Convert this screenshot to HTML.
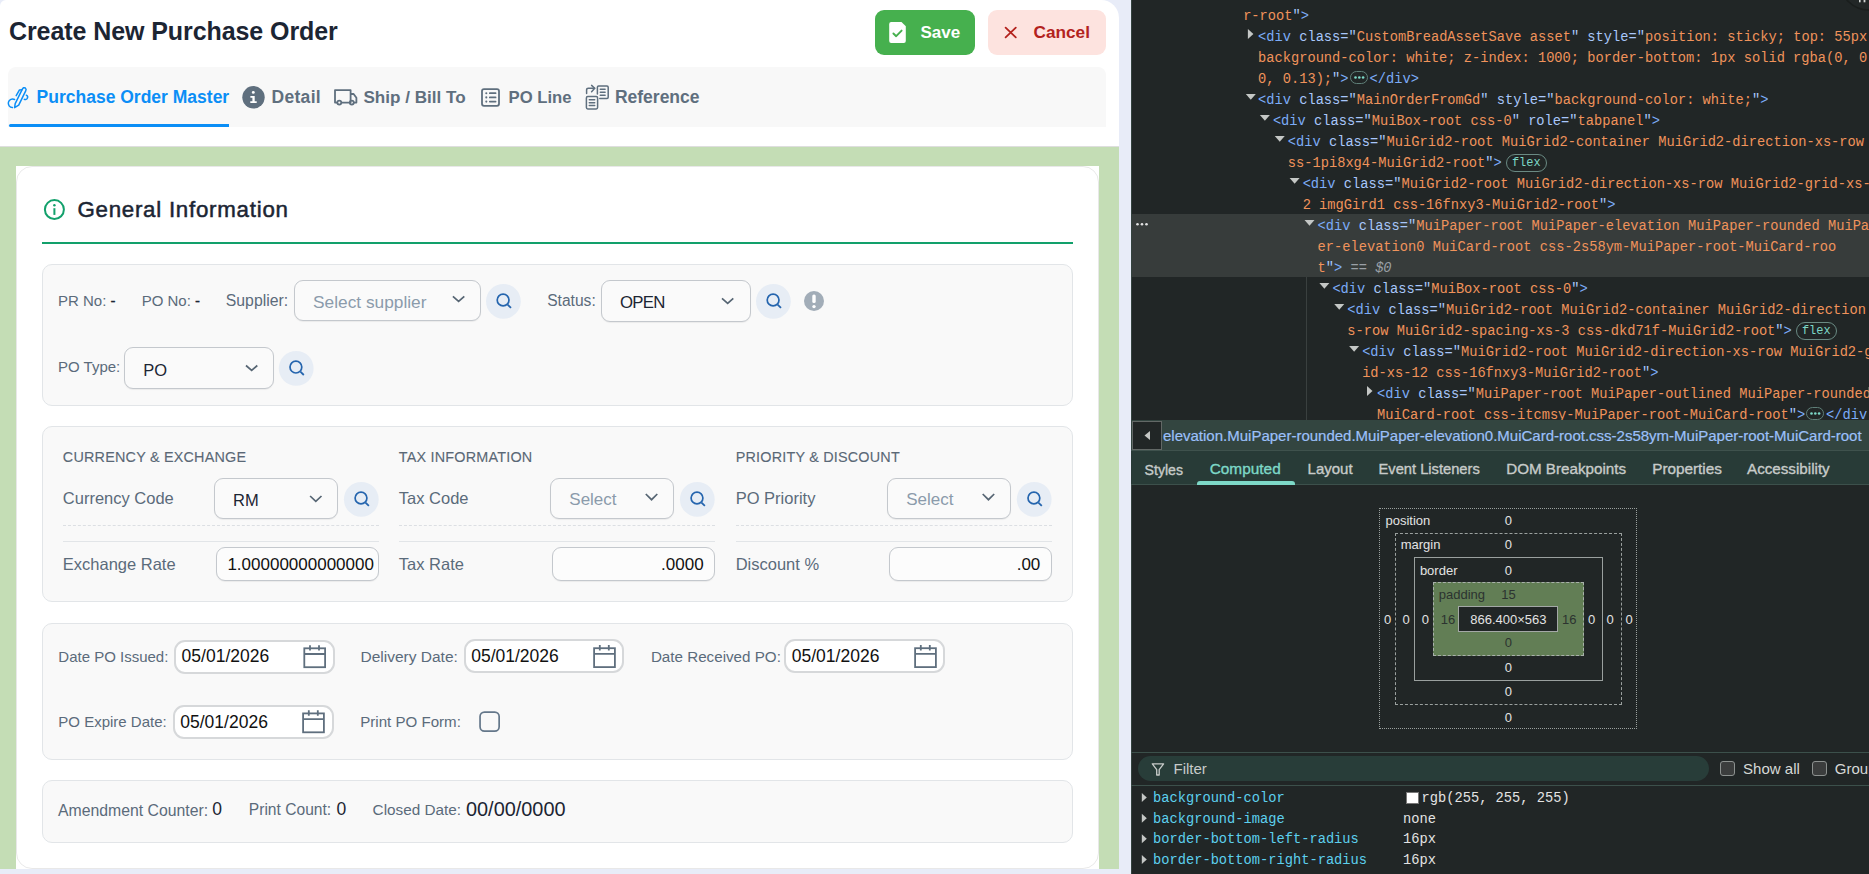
<!DOCTYPE html><html><head><meta charset="utf-8"><title>Create New Purchase Order</title><style>html,body{margin:0;padding:0;}body{width:1869px;height:874px;overflow:hidden;position:relative;background:#e8ecf8;font-family:"Liberation Sans",sans-serif;}</style></head><body>
<div style="position:absolute;left:0px;top:0px;width:1119px;height:869px;background:#fff;border-radius:6px 18px 0 0;"></div>
<div style="position:absolute;left:0px;top:146px;width:1119px;height:1px;background:rgba(0,0,0,0.13);"></div>
<div style="position:absolute;left:0px;top:147px;width:1119px;height:722px;background:#c4ddb5;"></div>
<div style="position:absolute;left:16px;top:166px;width:1083px;height:703px;background:#fff;"></div>
<div style="position:absolute;left:16px;top:166px;width:1083px;height:703px;border:1px solid rgba(0,0,0,0.09);border-radius:16px;box-sizing:border-box;"></div>
<div style="position:absolute;left:9.00px;top:15.33px;line-height:32px;font-size:25px;font-family:'Liberation Sans', sans-serif;font-weight:700;color:#1c2533;white-space:pre;letter-spacing:-0.08px;">Create New Purchase Order</div>
<div style="position:absolute;left:875px;top:10px;width:100px;height:45px;background:#46b04e;border-radius:9px;"></div>
<div style="position:absolute;left:920.50px;top:21.61px;line-height:22px;font-size:17px;font-family:'Liberation Sans', sans-serif;font-weight:700;color:#ffffff;white-space:pre;">Save</div>
<div style="position:absolute;left:988px;top:10px;width:118px;height:45px;background:#fde3df;border-radius:9px;"></div>
<div style="position:absolute;left:1033.60px;top:20.84px;line-height:22px;font-size:17.2px;font-family:'Liberation Sans', sans-serif;font-weight:700;color:#b3221d;white-space:pre;">Cancel</div>
<div style="position:absolute;left:8px;top:67px;width:1098px;height:60px;background:#f8f8f8;border-radius:8px 8px 0 0;"></div>
<div style="position:absolute;left:9px;top:124px;width:220px;height:3px;background:#0b8ef6;border-radius:2px 0 0 2px;"></div>
<div style="position:absolute;left:36.60px;top:86.43px;line-height:23px;font-size:17.5px;font-family:'Liberation Sans', sans-serif;font-weight:700;color:#0b8ef6;white-space:pre;">Purchase Order Master</div>
<div style="position:absolute;left:271.50px;top:86.43px;line-height:23px;font-size:17.5px;font-family:'Liberation Sans', sans-serif;font-weight:700;color:#5f6f7e;white-space:pre;letter-spacing:0.3px;">Detail</div>
<div style="position:absolute;left:363.40px;top:87.07px;line-height:22px;font-size:17.1px;font-family:'Liberation Sans', sans-serif;font-weight:700;color:#5f6f7e;white-space:pre;">Ship / Bill To</div>
<div style="position:absolute;left:508.50px;top:87.21px;line-height:22px;font-size:16.7px;font-family:'Liberation Sans', sans-serif;font-weight:700;color:#5f6f7e;white-space:pre;">PO Line</div>
<div style="position:absolute;left:614.90px;top:86.43px;line-height:23px;font-size:17.5px;font-family:'Liberation Sans', sans-serif;font-weight:700;color:#5f6f7e;white-space:pre;">Reference</div>
<div style="position:absolute;left:77.40px;top:194.77px;line-height:29px;font-size:22.3px;font-family:'Liberation Sans', sans-serif;font-weight:400;color:#1c2533;white-space:pre;letter-spacing:0.75px;-webkit-text-stroke:0.5px #1c2533;">General Information</div>
<div style="position:absolute;left:42px;top:242px;width:1031px;height:2px;background:#12a06b;"></div>
<div style="position:absolute;left:42px;top:264px;width:1031px;height:142px;background:#f9f9f9;border:1px solid #e2e5e8;border-radius:10px;box-sizing:border-box;"></div>
<div style="position:absolute;left:58.00px;top:290.80px;line-height:20px;font-size:15px;font-family:'Liberation Sans', sans-serif;font-weight:400;color:#5b6b7b;white-space:pre;">PR No: <span style="color:#1c2533;-webkit-text-stroke:0.3px #1c2533">-</span></div>
<div style="position:absolute;left:141.70px;top:290.80px;line-height:20px;font-size:15px;font-family:'Liberation Sans', sans-serif;font-weight:400;color:#5b6b7b;white-space:pre;">PO No: <span style="color:#1c2533;-webkit-text-stroke:0.3px #1c2533">-</span></div>
<div style="position:absolute;left:225.80px;top:290.02px;line-height:21px;font-size:15.8px;font-family:'Liberation Sans', sans-serif;font-weight:400;color:#5b6b7b;white-space:pre;">Supplier:</div>
<div style="position:absolute;left:294px;top:280px;width:187px;height:41px;background:#fafafa;border:1px solid #c4c8cd;border-radius:9px;box-sizing:border-box;box-shadow:0 1px 1px rgba(0,0,0,0.06);"></div>
<div style="position:absolute;left:313.10px;top:291.30px;line-height:22px;font-size:17.3px;font-family:'Liberation Sans', sans-serif;font-weight:400;color:#8b9bab;white-space:pre;">Select supplier</div>
<div style="position:absolute;left:547.20px;top:290.59px;line-height:20px;font-size:15.6px;font-family:'Liberation Sans', sans-serif;font-weight:400;color:#5b6b7b;white-space:pre;">Status:</div>
<div style="position:absolute;left:601px;top:280px;width:150px;height:42px;background:#fafafa;border:1px solid #c4c8cd;border-radius:9px;box-sizing:border-box;box-shadow:0 1px 1px rgba(0,0,0,0.06);"></div>
<div style="position:absolute;left:620.00px;top:292.38px;line-height:22px;font-size:16.8px;font-family:'Liberation Sans', sans-serif;font-weight:400;color:#1c2533;white-space:pre;letter-spacing:-0.7px;">OPEN</div>
<div style="position:absolute;left:58.00px;top:357.30px;line-height:20px;font-size:15px;font-family:'Liberation Sans', sans-serif;font-weight:400;color:#5b6b7b;white-space:pre;">PO Type:</div>
<div style="position:absolute;left:124px;top:347px;width:150px;height:42px;background:#fafafa;border:1px solid #c4c8cd;border-radius:9px;box-sizing:border-box;box-shadow:0 1px 1px rgba(0,0,0,0.06);"></div>
<div style="position:absolute;left:143.30px;top:360.28px;line-height:21px;font-size:16.5px;font-family:'Liberation Sans', sans-serif;font-weight:400;color:#1c2533;white-space:pre;">PO</div>
<div style="position:absolute;left:42px;top:426px;width:1031px;height:176px;background:#f9f9f9;border:1px solid #e2e5e8;border-radius:10px;box-sizing:border-box;"></div>
<div style="position:absolute;left:62.80px;top:448.11px;line-height:19px;font-size:14.4px;font-family:'Liberation Sans', sans-serif;font-weight:400;color:#5a6876;white-space:pre;letter-spacing:0.2px;-webkit-text-stroke:0.12px #5a6876;">CURRENCY &amp; EXCHANGE</div>
<div style="position:absolute;left:62.80px;top:487.78px;line-height:21px;font-size:16.5px;font-family:'Liberation Sans', sans-serif;font-weight:400;color:#5b6b7b;white-space:pre;">Currency Code</div>
<div style="position:absolute;left:214.3px;top:478px;width:124.0px;height:41px;background:#fafafa;border:1px solid #c4c8cd;border-radius:9px;box-sizing:border-box;box-shadow:0 1px 1px rgba(0,0,0,0.06);"></div>
<div style="position:absolute;left:233.00px;top:489.68px;line-height:21px;font-size:16.5px;font-family:'Liberation Sans', sans-serif;font-weight:400;color:#1c2533;white-space:pre;">RM</div>
<div style="position:absolute;left:62.8px;top:525px;width:316px;height:1px;border-top:1px dashed #dcdfe3;"></div>
<div style="position:absolute;left:62.8px;top:541px;width:316px;height:1px;background:#e2e5e8;"></div>
<div style="position:absolute;left:62.80px;top:553.78px;line-height:21px;font-size:16.5px;font-family:'Liberation Sans', sans-serif;font-weight:400;color:#5b6b7b;white-space:pre;">Exchange Rate</div>
<div style="position:absolute;left:215.8px;top:547px;width:163px;height:34px;background:#fcfcfc;border:1px solid #c4c8cd;border-radius:9px;box-sizing:border-box;box-shadow:0 1px 1px rgba(0,0,0,0.06);"></div>
<div style="position:absolute;left:398.80px;top:448.11px;line-height:19px;font-size:14.4px;font-family:'Liberation Sans', sans-serif;font-weight:400;color:#5a6876;white-space:pre;letter-spacing:0.2px;-webkit-text-stroke:0.12px #5a6876;">TAX INFORMATION</div>
<div style="position:absolute;left:398.80px;top:487.78px;line-height:21px;font-size:16.5px;font-family:'Liberation Sans', sans-serif;font-weight:400;color:#5b6b7b;white-space:pre;">Tax Code</div>
<div style="position:absolute;left:550.3px;top:478px;width:124.0px;height:41px;background:#fafafa;border:1px solid #c4c8cd;border-radius:9px;box-sizing:border-box;box-shadow:0 1px 1px rgba(0,0,0,0.06);"></div>
<div style="position:absolute;left:569.30px;top:489.01px;line-height:22px;font-size:17px;font-family:'Liberation Sans', sans-serif;font-weight:400;color:#8b9bab;white-space:pre;">Select</div>
<div style="position:absolute;left:398.8px;top:525px;width:316px;height:1px;border-top:1px dashed #dcdfe3;"></div>
<div style="position:absolute;left:398.8px;top:541px;width:316px;height:1px;background:#e2e5e8;"></div>
<div style="position:absolute;left:398.80px;top:553.78px;line-height:21px;font-size:16.5px;font-family:'Liberation Sans', sans-serif;font-weight:400;color:#5b6b7b;white-space:pre;">Tax Rate</div>
<div style="position:absolute;left:551.8px;top:547px;width:163px;height:34px;background:#fcfcfc;border:1px solid #c4c8cd;border-radius:9px;box-sizing:border-box;box-shadow:0 1px 1px rgba(0,0,0,0.06);"></div>
<div style="position:absolute;left:735.70px;top:448.11px;line-height:19px;font-size:14.4px;font-family:'Liberation Sans', sans-serif;font-weight:400;color:#5a6876;white-space:pre;letter-spacing:0.2px;-webkit-text-stroke:0.12px #5a6876;">PRIORITY &amp; DISCOUNT</div>
<div style="position:absolute;left:735.70px;top:487.78px;line-height:21px;font-size:16.5px;font-family:'Liberation Sans', sans-serif;font-weight:400;color:#5b6b7b;white-space:pre;">PO Priority</div>
<div style="position:absolute;left:887.2px;top:478px;width:124.0px;height:41px;background:#fafafa;border:1px solid #c4c8cd;border-radius:9px;box-sizing:border-box;box-shadow:0 1px 1px rgba(0,0,0,0.06);"></div>
<div style="position:absolute;left:906.20px;top:489.01px;line-height:22px;font-size:17px;font-family:'Liberation Sans', sans-serif;font-weight:400;color:#8b9bab;white-space:pre;">Select</div>
<div style="position:absolute;left:735.7px;top:525px;width:316px;height:1px;border-top:1px dashed #dcdfe3;"></div>
<div style="position:absolute;left:735.7px;top:541px;width:316px;height:1px;background:#e2e5e8;"></div>
<div style="position:absolute;left:735.70px;top:553.78px;line-height:21px;font-size:16.5px;font-family:'Liberation Sans', sans-serif;font-weight:400;color:#5b6b7b;white-space:pre;">Discount %</div>
<div style="position:absolute;left:888.7px;top:547px;width:163px;height:34px;background:#fcfcfc;border:1px solid #c4c8cd;border-radius:9px;box-sizing:border-box;box-shadow:0 1px 1px rgba(0,0,0,0.06);"></div>
<div style="position:absolute;left:217px;top:548px;width:158px;height:32px;overflow:hidden;"><div style="position:absolute;left:10.400000000000006px;top:0.71px;line-height:32px;font-size:17px;font-family:'Liberation Sans', sans-serif;color:#111;white-space:pre;">1.00000000000000</div></div>
<div style="position:absolute;left:0.00px;top:553.71px;line-height:22px;font-size:17px;font-family:'Liberation Sans', sans-serif;font-weight:400;color:#111;white-space:pre;width:703.6px;text-align:right;">.0000</div>
<div style="position:absolute;left:0.00px;top:553.71px;line-height:22px;font-size:17px;font-family:'Liberation Sans', sans-serif;font-weight:400;color:#111;white-space:pre;width:1040.3px;text-align:right;">.00</div>
<div style="position:absolute;left:42px;top:623px;width:1031px;height:137px;background:#f9f9f9;border:1px solid #e2e5e8;border-radius:10px;box-sizing:border-box;"></div>
<div style="position:absolute;left:58.30px;top:646.80px;line-height:20px;font-size:15px;font-family:'Liberation Sans', sans-serif;font-weight:400;color:#5b6b7b;white-space:pre;">Date PO Issued:</div>
<div style="position:absolute;left:174px;top:639.5px;width:160.5px;height:34.0px;background:#fff;border:2px solid #d6d8da;border-radius:11px;box-sizing:border-box;"></div>
<div style="position:absolute;left:181.60px;top:645.43px;line-height:23px;font-size:17.5px;font-family:'Liberation Sans', sans-serif;font-weight:400;color:#111;white-space:pre;">05/01/2026</div>
<div style="position:absolute;left:360.50px;top:646.63px;line-height:20px;font-size:15.5px;font-family:'Liberation Sans', sans-serif;font-weight:400;color:#5b6b7b;white-space:pre;">Delivery Date:</div>
<div style="position:absolute;left:463.6px;top:639.4px;width:160.60000000000002px;height:34.0px;background:#fff;border:2px solid #d6d8da;border-radius:11px;box-sizing:border-box;"></div>
<div style="position:absolute;left:471.20px;top:645.33px;line-height:23px;font-size:17.5px;font-family:'Liberation Sans', sans-serif;font-weight:400;color:#111;white-space:pre;">05/01/2026</div>
<div style="position:absolute;left:650.90px;top:646.73px;line-height:20px;font-size:15.2px;font-family:'Liberation Sans', sans-serif;font-weight:400;color:#5b6b7b;white-space:pre;">Date Received PO:</div>
<div style="position:absolute;left:783.5px;top:639.4px;width:161.70000000000005px;height:34.0px;background:#fff;border:2px solid #d6d8da;border-radius:11px;box-sizing:border-box;"></div>
<div style="position:absolute;left:791.80px;top:645.33px;line-height:23px;font-size:17.5px;font-family:'Liberation Sans', sans-serif;font-weight:400;color:#111;white-space:pre;">05/01/2026</div>
<div style="position:absolute;left:58.30px;top:711.60px;line-height:20px;font-size:15px;font-family:'Liberation Sans', sans-serif;font-weight:400;color:#5b6b7b;white-space:pre;">PO Expire Date:</div>
<div style="position:absolute;left:172.7px;top:704.6px;width:160.90000000000003px;height:34.0px;background:#fff;border:2px solid #d6d8da;border-radius:11px;box-sizing:border-box;"></div>
<div style="position:absolute;left:180.30px;top:710.53px;line-height:23px;font-size:17.5px;font-family:'Liberation Sans', sans-serif;font-weight:400;color:#111;white-space:pre;">05/01/2026</div>
<div style="position:absolute;left:360.20px;top:711.56px;line-height:20px;font-size:15.1px;font-family:'Liberation Sans', sans-serif;font-weight:400;color:#5b6b7b;white-space:pre;">Print PO Form:</div>
<div style="position:absolute;left:42px;top:780px;width:1031px;height:63px;background:#f9f9f9;border:1px solid #e2e5e8;border-radius:10px;box-sizing:border-box;"></div>
<div style="position:absolute;left:58.00px;top:799.52px;line-height:21px;font-size:15.8px;font-family:'Liberation Sans', sans-serif;font-weight:400;color:#5b6b7b;white-space:pre;">Amendment Counter:</div>
<div style="position:absolute;left:212.30px;top:797.93px;line-height:23px;font-size:17.5px;font-family:'Liberation Sans', sans-serif;font-weight:400;color:#1c2533;white-space:pre;">0</div>
<div style="position:absolute;left:248.80px;top:800.09px;line-height:20px;font-size:15.6px;font-family:'Liberation Sans', sans-serif;font-weight:400;color:#5b6b7b;white-space:pre;">Print Count:</div>
<div style="position:absolute;left:336.60px;top:797.93px;line-height:23px;font-size:17.5px;font-family:'Liberation Sans', sans-serif;font-weight:400;color:#1c2533;white-space:pre;">0</div>
<div style="position:absolute;left:372.60px;top:800.20px;line-height:20px;font-size:15.3px;font-family:'Liberation Sans', sans-serif;font-weight:400;color:#5b6b7b;white-space:pre;">Closed Date:</div>
<div style="position:absolute;left:466.00px;top:795.60px;line-height:26px;font-size:19.9px;font-family:'Liberation Sans', sans-serif;font-weight:400;color:#1c2533;white-space:pre;">00/00/0000</div>
<div style="position:absolute;left:1131px;top:0px;width:738px;height:874px;background:#212626;"></div>
<div style="position:absolute;left:1131px;top:0px;width:1px;height:874px;background:#34433f;"></div>
<div style="position:absolute;left:1132px;top:214px;width:737px;height:63px;background:#373c3b;"></div>
<div style="position:absolute;left:1306px;top:277px;width:1px;height:143px;background:#3a403f;"></div>
<div style="position:absolute;left:1243.125px;top:5.5px;height:21px;line-height:21px;font-size:13.72px;font-family:'Liberation Mono', monospace;white-space:pre;"><span style="color:#f0935b">r-root</span><span style="color:#a8c7fa">&quot;</span><span style="color:#7cacf8">&gt;</span></div>
<div style="position:absolute;left:1258.0px;top:26.5px;height:21px;line-height:21px;font-size:13.72px;font-family:'Liberation Mono', monospace;white-space:pre;"><span style="color:#7cacf8">&lt;div</span> <span style="color:#a8c7fa">class</span><span style="color:#a8c7fa">=&quot;</span><span style="color:#f0935b">CustomBreadAssetSave asset</span><span style="color:#a8c7fa">&quot;</span> <span style="color:#a8c7fa">style</span><span style="color:#a8c7fa">=&quot;</span><span style="color:#f0935b">position: sticky; top: 55px</span></div>
<div style="position:absolute;left:1258.0px;top:47.5px;height:21px;line-height:21px;font-size:13.72px;font-family:'Liberation Mono', monospace;white-space:pre;"><span style="color:#f0935b">background-color: white; z-index: 1000; border-bottom: 1px solid rgba(0, 0</span></div>
<div style="position:absolute;left:1258.0px;top:68.5px;height:21px;line-height:21px;font-size:13.72px;font-family:'Liberation Mono', monospace;white-space:pre;"><span style="color:#f0935b">0, 0.13);</span><span style="color:#a8c7fa">&quot;</span><span style="color:#7cacf8">&gt;</span><span style="display:inline-block;width:18px;height:13px;border:1px solid #5f7f78;border-radius:7px;box-sizing:border-box;vertical-align:top;margin:2.1px 2px 0 1px;position:relative;"><svg width="16" height="11" style="position:absolute;left:0;top:0"><circle cx="4.5" cy="5.5" r="1.3" fill="#7dd8c7"/><circle cx="8.3" cy="5.5" r="1.3" fill="#7dd8c7"/><circle cx="12.1" cy="5.5" r="1.3" fill="#7dd8c7"/></svg></span><span style="color:#7cacf8">&lt;/div&gt;</span></div>
<div style="position:absolute;left:1258.0px;top:89.5px;height:21px;line-height:21px;font-size:13.72px;font-family:'Liberation Mono', monospace;white-space:pre;"><span style="color:#7cacf8">&lt;div</span> <span style="color:#a8c7fa">class</span><span style="color:#a8c7fa">=&quot;</span><span style="color:#f0935b">MainOrderFromGd</span><span style="color:#a8c7fa">&quot;</span> <span style="color:#a8c7fa">style</span><span style="color:#a8c7fa">=&quot;</span><span style="color:#f0935b">background-color: white;</span><span style="color:#a8c7fa">&quot;</span><span style="color:#7cacf8">&gt;</span></div>
<div style="position:absolute;left:1272.875px;top:110.5px;height:21px;line-height:21px;font-size:13.72px;font-family:'Liberation Mono', monospace;white-space:pre;"><span style="color:#7cacf8">&lt;div</span> <span style="color:#a8c7fa">class</span><span style="color:#a8c7fa">=&quot;</span><span style="color:#f0935b">MuiBox-root css-0</span><span style="color:#a8c7fa">&quot;</span> <span style="color:#a8c7fa">role</span><span style="color:#a8c7fa">=&quot;</span><span style="color:#f0935b">tabpanel</span><span style="color:#a8c7fa">&quot;</span><span style="color:#7cacf8">&gt;</span></div>
<div style="position:absolute;left:1287.75px;top:131.5px;height:21px;line-height:21px;font-size:13.72px;font-family:'Liberation Mono', monospace;white-space:pre;"><span style="color:#7cacf8">&lt;div</span> <span style="color:#a8c7fa">class</span><span style="color:#a8c7fa">=&quot;</span><span style="color:#f0935b">MuiGrid2-root MuiGrid2-container MuiGrid2-direction-xs-row</span></div>
<div style="position:absolute;left:1287.75px;top:152.5px;height:21px;line-height:21px;font-size:13.72px;font-family:'Liberation Mono', monospace;white-space:pre;"><span style="color:#f0935b">ss-1pi8xg4-MuiGrid2-root</span><span style="color:#a8c7fa">&quot;</span><span style="color:#7cacf8">&gt;</span><span style="display:inline-block;width:41px;height:18px;border:1px solid #6a8a83;border-radius:9px;box-sizing:border-box;vertical-align:top;margin:1.6px 0 0 4px;text-align:center;line-height:16px;font-size:12px;color:#7dd8c7;">flex</span></div>
<div style="position:absolute;left:1302.625px;top:173.5px;height:21px;line-height:21px;font-size:13.72px;font-family:'Liberation Mono', monospace;white-space:pre;"><span style="color:#7cacf8">&lt;div</span> <span style="color:#a8c7fa">class</span><span style="color:#a8c7fa">=&quot;</span><span style="color:#f0935b">MuiGrid2-root MuiGrid2-direction-xs-row MuiGrid2-grid-xs-</span></div>
<div style="position:absolute;left:1302.625px;top:194.5px;height:21px;line-height:21px;font-size:13.72px;font-family:'Liberation Mono', monospace;white-space:pre;"><span style="color:#f0935b">2 imgGird1 css-16fnxy3-MuiGrid2-root</span><span style="color:#a8c7fa">&quot;</span><span style="color:#7cacf8">&gt;</span></div>
<div style="position:absolute;left:1317.5px;top:215.5px;height:21px;line-height:21px;font-size:13.72px;font-family:'Liberation Mono', monospace;white-space:pre;"><span style="color:#7cacf8">&lt;div</span> <span style="color:#a8c7fa">class</span><span style="color:#a8c7fa">=&quot;</span><span style="color:#f0935b">MuiPaper-root MuiPaper-elevation MuiPaper-rounded MuiPa</span></div>
<div style="position:absolute;left:1317.5px;top:236.5px;height:21px;line-height:21px;font-size:13.72px;font-family:'Liberation Mono', monospace;white-space:pre;"><span style="color:#f0935b">er-elevation0 MuiCard-root css-2s58ym-MuiPaper-root-MuiCard-roo</span></div>
<div style="position:absolute;left:1317.5px;top:257.5px;height:21px;line-height:21px;font-size:13.72px;font-family:'Liberation Mono', monospace;white-space:pre;"><span style="color:#f0935b">t</span><span style="color:#a8c7fa">&quot;</span><span style="color:#7cacf8">&gt;</span><span style="color:#9aa0a6"> == </span><i style="color:#9aa0a6">$0</i></div>
<div style="position:absolute;left:1332.375px;top:278.5px;height:21px;line-height:21px;font-size:13.72px;font-family:'Liberation Mono', monospace;white-space:pre;"><span style="color:#7cacf8">&lt;div</span> <span style="color:#a8c7fa">class</span><span style="color:#a8c7fa">=&quot;</span><span style="color:#f0935b">MuiBox-root css-0</span><span style="color:#a8c7fa">&quot;</span><span style="color:#7cacf8">&gt;</span></div>
<div style="position:absolute;left:1347.25px;top:299.5px;height:21px;line-height:21px;font-size:13.72px;font-family:'Liberation Mono', monospace;white-space:pre;"><span style="color:#7cacf8">&lt;div</span> <span style="color:#a8c7fa">class</span><span style="color:#a8c7fa">=&quot;</span><span style="color:#f0935b">MuiGrid2-root MuiGrid2-container MuiGrid2-direction</span></div>
<div style="position:absolute;left:1347.25px;top:320.5px;height:21px;line-height:21px;font-size:13.72px;font-family:'Liberation Mono', monospace;white-space:pre;"><span style="color:#f0935b">s-row MuiGrid2-spacing-xs-3 css-dkd71f-MuiGrid2-root</span><span style="color:#a8c7fa">&quot;</span><span style="color:#7cacf8">&gt;</span><span style="display:inline-block;width:41px;height:18px;border:1px solid #6a8a83;border-radius:9px;box-sizing:border-box;vertical-align:top;margin:1.6px 0 0 4px;text-align:center;line-height:16px;font-size:12px;color:#7dd8c7;">flex</span></div>
<div style="position:absolute;left:1362.125px;top:341.5px;height:21px;line-height:21px;font-size:13.72px;font-family:'Liberation Mono', monospace;white-space:pre;"><span style="color:#7cacf8">&lt;div</span> <span style="color:#a8c7fa">class</span><span style="color:#a8c7fa">=&quot;</span><span style="color:#f0935b">MuiGrid2-root MuiGrid2-direction-xs-row MuiGrid2-g</span></div>
<div style="position:absolute;left:1362.125px;top:362.5px;height:21px;line-height:21px;font-size:13.72px;font-family:'Liberation Mono', monospace;white-space:pre;"><span style="color:#f0935b">id-xs-12 css-16fnxy3-MuiGrid2-root</span><span style="color:#a8c7fa">&quot;</span><span style="color:#7cacf8">&gt;</span></div>
<div style="position:absolute;left:1377.0px;top:383.5px;height:21px;line-height:21px;font-size:13.72px;font-family:'Liberation Mono', monospace;white-space:pre;"><span style="color:#7cacf8">&lt;div</span> <span style="color:#a8c7fa">class</span><span style="color:#a8c7fa">=&quot;</span><span style="color:#f0935b">MuiPaper-root MuiPaper-outlined MuiPaper-rounded</span></div>
<div style="position:absolute;left:1377.0px;top:404.5px;height:21px;line-height:21px;font-size:13.72px;font-family:'Liberation Mono', monospace;white-space:pre;"><span style="color:#f0935b">MuiCard-root css-itcmsy-MuiPaper-root-MuiCard-root</span><span style="color:#a8c7fa">&quot;</span><span style="color:#7cacf8">&gt;</span><span style="display:inline-block;width:18px;height:13px;border:1px solid #5f7f78;border-radius:7px;box-sizing:border-box;vertical-align:top;margin:2.1px 2px 0 1px;position:relative;"><svg width="16" height="11" style="position:absolute;left:0;top:0"><circle cx="4.5" cy="5.5" r="1.3" fill="#7dd8c7"/><circle cx="8.3" cy="5.5" r="1.3" fill="#7dd8c7"/><circle cx="12.1" cy="5.5" r="1.3" fill="#7dd8c7"/></svg></span><span style="color:#7cacf8">&lt;/div</span></div>
<div style="position:absolute;left:1131px;top:420px;width:738px;height:31px;background:#334540;"></div>
<div style="position:absolute;left:1131px;top:450px;width:738px;height:1px;background:#3f524d;"></div>
<div style="position:absolute;left:1132px;top:421px;width:30px;height:29px;background:#212626;border:1px solid #626866;box-sizing:border-box;"></div>
<div style="position:absolute;left:1163.00px;top:425.50px;line-height:20px;font-size:15.0px;font-family:'Liberation Sans', sans-serif;font-weight:400;color:#9cc0fa;white-space:pre;-webkit-text-stroke:0.2px #9cc0fa;">elevation.MuiPaper-rounded.MuiPaper-elevation0.MuiCard-root.css-2s58ym-MuiPaper-root-MuiCard-root</div>
<div style="position:absolute;left:1131px;top:451px;width:738px;height:33px;background:#283b37;"></div>
<div style="position:absolute;left:1131px;top:484px;width:738px;height:1px;background:#3c504b;"></div>
<div style="position:absolute;left:1197px;top:481px;width:98px;height:4px;background:#7dd8c7;border-radius:3px 3px 0 0;"></div>
<div style="position:absolute;left:1144.60px;top:460.61px;line-height:18px;font-size:14.1px;font-family:'Liberation Sans', sans-serif;font-weight:400;color:#c7cbc9;white-space:pre;-webkit-text-stroke:0.35px #c7cbc9;">Styles</div>
<div style="position:absolute;left:1209.70px;top:459.16px;line-height:20px;font-size:15.4px;font-family:'Liberation Sans', sans-serif;font-weight:400;color:#7dd8c7;white-space:pre;-webkit-text-stroke:0.35px #7dd8c7;">Computed</div>
<div style="position:absolute;left:1307.60px;top:459.30px;line-height:20px;font-size:15.0px;font-family:'Liberation Sans', sans-serif;font-weight:400;color:#c7cbc9;white-space:pre;-webkit-text-stroke:0.35px #c7cbc9;">Layout</div>
<div style="position:absolute;left:1378.50px;top:459.90px;line-height:19px;font-size:14.7px;font-family:'Liberation Sans', sans-serif;font-weight:400;color:#c7cbc9;white-space:pre;-webkit-text-stroke:0.35px #c7cbc9;">Event Listeners</div>
<div style="position:absolute;left:1506.20px;top:459.23px;line-height:20px;font-size:15.2px;font-family:'Liberation Sans', sans-serif;font-weight:400;color:#c7cbc9;white-space:pre;-webkit-text-stroke:0.35px #c7cbc9;">DOM Breakpoints</div>
<div style="position:absolute;left:1652.20px;top:459.20px;line-height:20px;font-size:15.3px;font-family:'Liberation Sans', sans-serif;font-weight:400;color:#c7cbc9;white-space:pre;-webkit-text-stroke:0.35px #c7cbc9;">Properties</div>
<div style="position:absolute;left:1747.00px;top:459.23px;line-height:20px;font-size:15.2px;font-family:'Liberation Sans', sans-serif;font-weight:400;color:#c7cbc9;white-space:pre;-webkit-text-stroke:0.35px #c7cbc9;">Accessibility</div>
<div style="position:absolute;left:1379px;top:508px;width:258px;height:221px;border:1px dotted #9aa09e;box-sizing:border-box;"></div>
<div style="position:absolute;left:1395px;top:533px;width:227px;height:172px;border:1px dashed #9aa09e;box-sizing:border-box;"></div>
<div style="position:absolute;left:1414px;top:557px;width:189px;height:124px;border:1px solid #9aa09e;box-sizing:border-box;"></div>
<div style="position:absolute;left:1433px;top:582px;width:151px;height:74px;background:#627e55;border:1px dashed #a9b0ab;box-sizing:border-box;"></div>
<div style="position:absolute;left:1458px;top:606px;width:100px;height:26px;background:#212626;border:1px solid #a3a8a6;box-sizing:border-box;"></div>
<div style="position:absolute;left:1385.5px;top:511.4px;height:20px;line-height:20px;font-size:13px;font-family:'Liberation Sans', sans-serif;color:#e3e3e3;white-space:pre;">position</div>
<div style="position:absolute;left:1400.7px;top:535.3px;height:20px;line-height:20px;font-size:13px;font-family:'Liberation Sans', sans-serif;color:#e3e3e3;white-space:pre;">margin</div>
<div style="position:absolute;left:1419.9px;top:560.6px;height:20px;line-height:20px;font-size:13px;font-family:'Liberation Sans', sans-serif;color:#e3e3e3;white-space:pre;">border</div>
<div style="position:absolute;left:1438.8px;top:584.8px;height:20px;line-height:20px;font-size:13px;font-family:'Liberation Sans', sans-serif;color:#2c3330;white-space:pre;">padding</div>
<div style="position:absolute;left:1448.4px;top:511.4px;width:120px;height:20px;line-height:20px;text-align:center;font-size:13px;font-family:'Liberation Sans', sans-serif;color:#e3e3e3;white-space:pre;">0</div>
<div style="position:absolute;left:1448.4px;top:535.3px;width:120px;height:20px;line-height:20px;text-align:center;font-size:13px;font-family:'Liberation Sans', sans-serif;color:#e3e3e3;white-space:pre;">0</div>
<div style="position:absolute;left:1448.4px;top:560.6px;width:120px;height:20px;line-height:20px;text-align:center;font-size:13px;font-family:'Liberation Sans', sans-serif;color:#e3e3e3;white-space:pre;">0</div>
<div style="position:absolute;left:1448.4px;top:584.8px;width:120px;height:20px;line-height:20px;text-align:center;font-size:13px;font-family:'Liberation Sans', sans-serif;color:#2c3330;white-space:pre;">15</div>
<div style="position:absolute;left:1448.4px;top:609.5px;width:120px;height:20px;line-height:20px;text-align:center;font-size:13px;font-family:'Liberation Sans', sans-serif;color:#e3e3e3;white-space:pre;">866.400×563</div>
<div style="position:absolute;left:1448.4px;top:633.4px;width:120px;height:20px;line-height:20px;text-align:center;font-size:13px;font-family:'Liberation Sans', sans-serif;color:#2c3330;white-space:pre;">0</div>
<div style="position:absolute;left:1448.4px;top:658.1px;width:120px;height:20px;line-height:20px;text-align:center;font-size:13px;font-family:'Liberation Sans', sans-serif;color:#e3e3e3;white-space:pre;">0</div>
<div style="position:absolute;left:1448.4px;top:682.3px;width:120px;height:20px;line-height:20px;text-align:center;font-size:13px;font-family:'Liberation Sans', sans-serif;color:#e3e3e3;white-space:pre;">0</div>
<div style="position:absolute;left:1448.4px;top:707.6px;width:120px;height:20px;line-height:20px;text-align:center;font-size:13px;font-family:'Liberation Sans', sans-serif;color:#e3e3e3;white-space:pre;">0</div>
<div style="position:absolute;left:1327.5px;top:609.5px;width:120px;height:20px;line-height:20px;text-align:center;font-size:13px;font-family:'Liberation Sans', sans-serif;color:#e3e3e3;white-space:pre;">0</div>
<div style="position:absolute;left:1346.2px;top:609.5px;width:120px;height:20px;line-height:20px;text-align:center;font-size:13px;font-family:'Liberation Sans', sans-serif;color:#e3e3e3;white-space:pre;">0</div>
<div style="position:absolute;left:1365.4px;top:609.5px;width:120px;height:20px;line-height:20px;text-align:center;font-size:13px;font-family:'Liberation Sans', sans-serif;color:#e3e3e3;white-space:pre;">0</div>
<div style="position:absolute;left:1387.9px;top:609.5px;width:120px;height:20px;line-height:20px;text-align:center;font-size:13px;font-family:'Liberation Sans', sans-serif;color:#2c3330;white-space:pre;">16</div>
<div style="position:absolute;left:1509.3px;top:609.5px;width:120px;height:20px;line-height:20px;text-align:center;font-size:13px;font-family:'Liberation Sans', sans-serif;color:#2c3330;white-space:pre;">16</div>
<div style="position:absolute;left:1531.6px;top:609.5px;width:120px;height:20px;line-height:20px;text-align:center;font-size:13px;font-family:'Liberation Sans', sans-serif;color:#e3e3e3;white-space:pre;">0</div>
<div style="position:absolute;left:1550px;top:609.5px;width:120px;height:20px;line-height:20px;text-align:center;font-size:13px;font-family:'Liberation Sans', sans-serif;color:#e3e3e3;white-space:pre;">0</div>
<div style="position:absolute;left:1569.2px;top:609.5px;width:120px;height:20px;line-height:20px;text-align:center;font-size:13px;font-family:'Liberation Sans', sans-serif;color:#e3e3e3;white-space:pre;">0</div>
<div style="position:absolute;left:1131px;top:752px;width:738px;height:1px;background:#3c504b;"></div>
<div style="position:absolute;left:1138px;top:756px;width:571px;height:25px;background:#283d39;border-radius:13px;"></div>
<div style="position:absolute;left:1131px;top:785px;width:738px;height:1px;background:#3c504b;"></div>
<div style="position:absolute;left:1173.50px;top:759.30px;line-height:20px;font-size:15px;font-family:'Liberation Sans', sans-serif;font-weight:400;color:#c7cbc9;white-space:pre;">Filter</div>
<div style="position:absolute;left:1720px;top:761px;width:15px;height:15px;background:#3b3d3d;border:1px solid #8c918f;border-radius:3px;box-sizing:border-box;"></div>
<div style="position:absolute;left:1743.10px;top:759.30px;line-height:20px;font-size:15px;font-family:'Liberation Sans', sans-serif;font-weight:400;color:#d6d9d7;white-space:pre;">Show all</div>
<div style="position:absolute;left:1812px;top:761px;width:15px;height:15px;background:#3b3d3d;border:1px solid #8c918f;border-radius:3px;box-sizing:border-box;"></div>
<div style="position:absolute;left:1834.80px;top:759.30px;line-height:20px;font-size:15px;font-family:'Liberation Sans', sans-serif;font-weight:400;color:#d6d9d7;white-space:pre;">Group</div>
<div style="position:absolute;left:1153.00px;top:789.95px;line-height:18px;font-size:13.72px;font-family:'Liberation Mono', monospace;font-weight:400;color:#5dd0ee;white-space:pre;">background-color</div>
<div style="position:absolute;left:1406px;top:791.5px;width:12.5px;height:12.5px;background:#fff;border:1px solid #777;box-sizing:border-box;"></div>
<div style="position:absolute;left:1421.50px;top:789.95px;line-height:18px;font-size:13.72px;font-family:'Liberation Mono', monospace;font-weight:400;color:#e3e3e3;white-space:pre;">rgb(255, 255, 255)</div>
<div style="position:absolute;left:1153.00px;top:810.55px;line-height:18px;font-size:13.72px;font-family:'Liberation Mono', monospace;font-weight:400;color:#5dd0ee;white-space:pre;">background-image</div>
<div style="position:absolute;left:1403.00px;top:810.55px;line-height:18px;font-size:13.72px;font-family:'Liberation Mono', monospace;font-weight:400;color:#e3e3e3;white-space:pre;">none</div>
<div style="position:absolute;left:1153.00px;top:831.15px;line-height:18px;font-size:13.72px;font-family:'Liberation Mono', monospace;font-weight:400;color:#5dd0ee;white-space:pre;">border-bottom-left-radius</div>
<div style="position:absolute;left:1403.00px;top:831.15px;line-height:18px;font-size:13.72px;font-family:'Liberation Mono', monospace;font-weight:400;color:#e3e3e3;white-space:pre;">16px</div>
<div style="position:absolute;left:1153.00px;top:851.75px;line-height:18px;font-size:13.72px;font-family:'Liberation Mono', monospace;font-weight:400;color:#5dd0ee;white-space:pre;">border-bottom-right-radius</div>
<div style="position:absolute;left:1403.00px;top:851.75px;line-height:18px;font-size:13.72px;font-family:'Liberation Mono', monospace;font-weight:400;color:#e3e3e3;white-space:pre;">16px</div>
<svg style="position:absolute;left:0;top:0;" width="1869" height="874" viewBox="0 0 1869 874"><path d="M889.2 24 Q889.2 22 891.2 22 L901.5 22 L905.8 26.3 L905.8 41 Q905.8 43 903.8 43 L891.2 43 Q889.2 43 889.2 41 Z" fill="#fff"/><path d="M893.4 33.5 L896.2 36.2 L901.6 30.6" stroke="#46b04e" stroke-width="1.9" fill="none" stroke-linecap="round" stroke-linejoin="round"/><path d="M1005.6 27.6 L1015.8 37.4 M1015.8 27.6 L1005.6 37.4" stroke="#b3221d" stroke-width="1.8" stroke-linecap="round"/><g stroke="#0b8ef6" stroke-width="1.5" fill="none" stroke-linecap="round" stroke-linejoin="round"><path d="M12.4 107.6 A4.3 4.3 0 1 1 14.6 99.5"/><path d="M26.3 95.2 A2.15 2.15 0 1 1 24.3 99.3"/><path d="M14.6 107.6 L15.2 103.6 L22.2 89.4 Q23.5 86.9 25.3 88 Q26.7 89.1 25.7 90.9 L18.7 105.1 Z"/><path d="M16.2 95.6 L19.5 89.9 L22 89.7"/></g><circle cx="253.5" cy="97.3" r="11.2" fill="#5f6f7e"/><circle cx="253.3" cy="92.4" r="1.45" fill="#fff"/><path d="M250.4 96 L254.7 96 L254.7 101.3 L256.7 101.3 L256.7 103.1 L250.3 103.1 L250.3 101.3 L252.4 101.3 L252.4 97.8 L250.4 97.8 Z" fill="#fff"/><g stroke="#5f6f7e" stroke-width="1.8" fill="none" stroke-linejoin="round"><path d="M337.3 102.6 L335 102.6 L335 90.1 L350.6 90.1 L350.6 102.6 L341.3 102.6"/><path d="M350.6 94 L353.6 94 L356.4 97.8 L356.4 102.6 L354 102.6"/><circle cx="339.3" cy="102.6" r="2"/><circle cx="351.8" cy="102.6" r="2"/></g><g stroke="#5f6f7e" fill="none"><rect x="482" y="89.1" width="17" height="16.7" rx="2" stroke-width="1.8"/><path d="M489.8 93.2 H495.6 M489.8 97.4 H495.6 M489.8 101.6 H495.6" stroke-width="1.7" stroke-linecap="round"/></g><g fill="#5f6f7e"><circle cx="486.3" cy="93.2" r="1.05"/><circle cx="486.3" cy="97.4" r="1.05"/><circle cx="486.3" cy="101.6" r="1.05"/></g><g stroke="#5f6f7e" stroke-width="1.5" fill="none" stroke-linecap="round" stroke-linejoin="round"><path d="M586.6 93.6 L586.6 90 Q586.6 88.3 588.4 88.3 L594.6 88.3"/><path d="M591.6 85.4 L594.7 88.3 L591.6 91.7"/><path d="M597.4 94 L597.4 87.2 Q597.4 86 598.6 86 L607 86 Q608.2 86 608.2 87.2 L608.2 97.3 Q608.2 98.5 607 98.5 L599.8 98.5"/><path d="M600.3 89.2 H605.1 M600.3 92.2 H605.1 M600.3 95.2 H605.1"/><rect x="586.4" y="96.5" width="11.2" height="12.4" rx="1.4"/><path d="M589.3 99.8 H594.7 M589.3 102.7 H594.7 M589.3 105.6 H594.7"/></g><circle cx="54.4" cy="209.6" r="9.5" stroke="#12a06b" stroke-width="2" fill="none"/><circle cx="54.4" cy="205.3" r="1.25" fill="#12a06b"/><rect x="53.4" y="208.2" width="2" height="6.7" fill="#12a06b"/><path d="M452.9 296.3 L458.6 301.4 L464.3 296.3" stroke="#566573" stroke-width="1.7" fill="none" stroke-linecap="butt" stroke-linejoin="miter"/><circle cx="503.4" cy="301.3" r="17.4" fill="#e7edf5"/><circle cx="503.09999999999997" cy="300.0" r="5.9" stroke="#2565ae" stroke-width="1.7" fill="none"/><path d="M507.59999999999997 304.6 L511.0 307.90000000000003" stroke="#2565ae" stroke-width="1.8" stroke-linecap="butt"/><path d="M722.0 298.3 L727.65 303.4 L733.3 298.3" stroke="#566573" stroke-width="1.7" fill="none" stroke-linecap="butt" stroke-linejoin="miter"/><circle cx="773.4" cy="301.3" r="17.4" fill="#e7edf5"/><circle cx="773.1" cy="300.0" r="5.9" stroke="#2565ae" stroke-width="1.7" fill="none"/><path d="M777.6 304.6 L781.0 307.90000000000003" stroke="#2565ae" stroke-width="1.8" stroke-linecap="butt"/><circle cx="814" cy="301" r="10" fill="#a2adb8"/><rect x="812.3" y="294.5" width="3.4" height="8.6" rx="1.6" fill="#fff"/><circle cx="814" cy="306.6" r="1.7" fill="#fff"/><path d="M246.0 365.5 L251.65 370.4 L257.3 365.5" stroke="#566573" stroke-width="1.7" fill="none" stroke-linecap="butt" stroke-linejoin="miter"/><circle cx="296.2" cy="368.4" r="17.4" fill="#e7edf5"/><circle cx="295.9" cy="367.09999999999997" r="5.9" stroke="#2565ae" stroke-width="1.7" fill="none"/><path d="M300.4 371.7 L303.8 375.0" stroke="#2565ae" stroke-width="1.8" stroke-linecap="butt"/><path d="M310.09999999999997 496.0 L315.79999999999995 501.4 L321.5 496.0" stroke="#566573" stroke-width="1.7" fill="none" stroke-linecap="butt" stroke-linejoin="miter"/><circle cx="361.3" cy="499.3" r="17.4" fill="#e7edf5"/><circle cx="361.0" cy="498.0" r="5.9" stroke="#2565ae" stroke-width="1.7" fill="none"/><path d="M365.5 502.6 L368.90000000000003 505.90000000000003" stroke="#2565ae" stroke-width="1.8" stroke-linecap="butt"/><path d="M645.8000000000001 494.0 L651.55 499.7 L657.3 494.0" stroke="#566573" stroke-width="1.7" fill="none" stroke-linecap="butt" stroke-linejoin="miter"/><circle cx="697.3" cy="499.3" r="17.4" fill="#e7edf5"/><circle cx="697.0" cy="498.0" r="5.9" stroke="#2565ae" stroke-width="1.7" fill="none"/><path d="M701.5 502.6 L704.9 505.90000000000003" stroke="#2565ae" stroke-width="1.8" stroke-linecap="butt"/><path d="M982.7 494.0 L988.45 499.7 L994.2 494.0" stroke="#566573" stroke-width="1.7" fill="none" stroke-linecap="butt" stroke-linejoin="miter"/><circle cx="1034.2" cy="499.3" r="17.4" fill="#e7edf5"/><circle cx="1033.9" cy="498.0" r="5.9" stroke="#2565ae" stroke-width="1.7" fill="none"/><path d="M1038.4 502.6 L1041.8 505.90000000000003" stroke="#2565ae" stroke-width="1.8" stroke-linecap="butt"/><g stroke="#5f6f7e" stroke-width="1.8" fill="none"><rect x="304.3" y="648.3" width="20.8" height="18.9"/><path d="M304.3 654.0 H325.1 M310 645.2 V650.6 M319 645.2 V650.6"/></g><g stroke="#5f6f7e" stroke-width="1.8" fill="none"><rect x="594.0999999999999" y="648.1999999999999" width="20.8" height="18.9"/><path d="M594.0999999999999 653.9 H614.9 M599.8 645.1 V650.5 M608.8 645.1 V650.5"/></g><g stroke="#5f6f7e" stroke-width="1.8" fill="none"><rect x="915.0999999999999" y="648.1999999999999" width="20.8" height="18.9"/><path d="M915.0999999999999 653.9 H935.9 M920.8 645.1 V650.5 M929.8 645.1 V650.5"/></g><g stroke="#5f6f7e" stroke-width="1.8" fill="none"><rect x="303.1" y="713.4" width="20.8" height="18.9"/><path d="M303.1 719.1 H323.90000000000003 M308.8 710.3000000000001 V715.7 M317.8 710.3000000000001 V715.7"/></g><rect x="480.05" y="712.05" width="19.1" height="19.1" rx="4.4" stroke="#64778a" stroke-width="1.7" fill="none"/><g fill="#e3e3e3"><circle cx="1137.5" cy="224.2" r="1.3"/><circle cx="1142" cy="224.2" r="1.3"/><circle cx="1146.5" cy="224.2" r="1.3"/></g><path d="M1247.9 29 L1253.4 34 L1247.9 39 Z" fill="#c4c7c5"/><path d="M1245.8 94 L1255.8 94 L1250.8 99.7 Z" fill="#c4c7c5"/><path d="M1259.875 115 L1269.875 115 L1264.875 120.7 Z" fill="#c4c7c5"/><path d="M1274.75 136 L1284.75 136 L1279.75 141.7 Z" fill="#c4c7c5"/><path d="M1289.625 178 L1299.625 178 L1294.625 183.7 Z" fill="#c4c7c5"/><path d="M1304.5 220 L1314.5 220 L1309.5 225.7 Z" fill="#c4c7c5"/><path d="M1319.375 283 L1329.375 283 L1324.375 288.7 Z" fill="#c4c7c5"/><path d="M1334.25 304 L1344.25 304 L1339.25 309.7 Z" fill="#c4c7c5"/><path d="M1349.125 346 L1359.125 346 L1354.125 351.7 Z" fill="#c4c7c5"/><path d="M1367.0 386 L1372.5 391 L1367.0 396 Z" fill="#c4c7c5"/><circle cx="1869" cy="-19.2" r="29.2" fill="#222727" stroke="#1a1e1d" stroke-width="1.6"/><rect x="1859" y="0" width="1.6" height="2.3" fill="#d0d3d1"/><rect x="1863.6" y="0" width="1.8" height="2.3" fill="#d0d3d1"/><path d="M1150 431 L1150 440 L1144.5 435.5 Z" fill="#c4c7c5"/><path d="M1152.3 763.8 L1163.6 763.8 L1159.2 769.6 L1159.2 775 L1156.7 775 L1156.7 769.6 Z" stroke="#c7cbc9" stroke-width="1.3" fill="none" stroke-linejoin="round"/><path d="M1141.8 793.1 L1146.8 797.6 L1141.8 802.1 Z" fill="#c4c7c5"/><path d="M1141.8 813.7 L1146.8 818.2 L1141.8 822.7 Z" fill="#c4c7c5"/><path d="M1141.8 834.3000000000001 L1146.8 838.8000000000001 L1141.8 843.3000000000001 Z" fill="#c4c7c5"/><path d="M1141.8 854.9 L1146.8 859.4 L1141.8 863.9 Z" fill="#c4c7c5"/></svg>
</body></html>
